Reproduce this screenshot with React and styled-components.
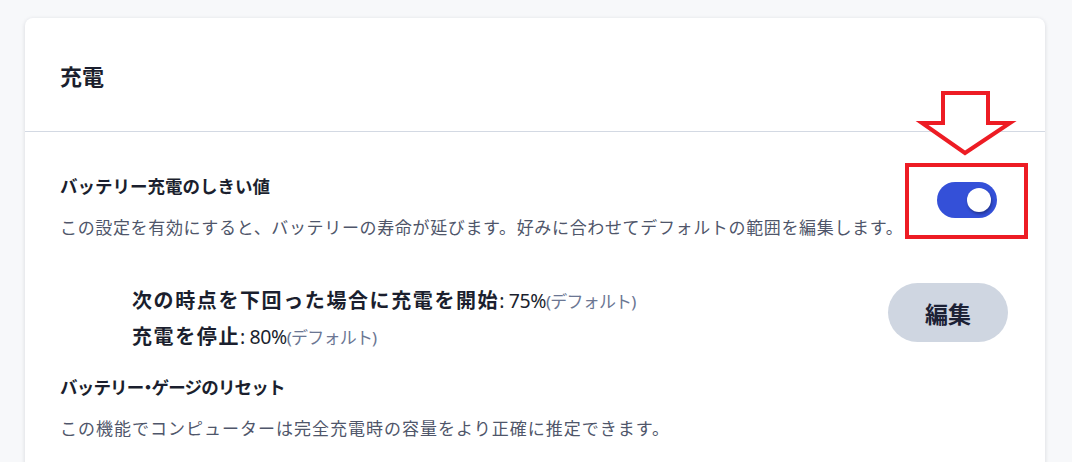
import React from "react";
import styled, { createGlobalStyle } from "styled-components";

const Global = createGlobalStyle`
  html, body { margin: 0; padding: 0; background: #f7f8fa; }
  body {
    font-family: "Noto Sans", "Noto Sans CJK JP", sans-serif;
    color: #1b1f2e;
  }
`;

const Page = styled.div`
  padding: 18px 27px 0 25px;
  height: 462px;
  box-sizing: border-box;
  overflow: hidden;
`;

const Card = styled.section`
  width: 1020px;
  background: #ffffff;
  border-radius: 8px;
  box-shadow: 0 1px 4px rgba(20, 30, 50, 0.14);
  min-height: 480px;
`;

const Header = styled.header`
  height: 114px;
  box-sizing: border-box;
  padding: 0 35px;
  display: flex;
  align-items: center;
  border-bottom: 1px solid #d3d9e3;
`;

const HeaderTitle = styled.h2`
  margin: 0;
  font-size: 22px;
  font-weight: 700;
  color: #1b1f2e;
`;

const Body = styled.div`
  padding: 41px 35px 0;
`;

const SettingRow = styled.div`
  display: flex;
  align-items: center;
  justify-content: space-between;
`;

const Texts = styled.div`
  display: flex;
  flex-direction: column;
  gap: 16px;
`;

const Title = styled.div`
  font-size: 17.5px;
  line-height: 26px;
  font-weight: 700;
  color: #1b1f2e;
  letter-spacing: ${(p) => (p.$tight ? "-0.8px" : "0")};
`;

const Dot = styled.span`
  font-feature-settings: "halt";
`;

const Desc = styled.div`
  font-size: 17px;
  letter-spacing: ${(p) => (p.$wide ? "1px" : "0.65px")};
  line-height: 26px;
  color: #4f566a;
`;

const ToggleWrap = styled.div`
  position: relative;
  margin-right: 13px;
  margin-top: -14px;
`;

const Track = styled.div`
  width: 60px;
  height: 36px;
  border-radius: 18px;
  background: #3450d8;
  display: flex;
  align-items: center;
  justify-content: flex-end;
  padding-right: 6px;
  box-sizing: border-box;
`;

const Knob = styled.div`
  width: 24px;
  height: 24px;
  border-radius: 50%;
  background: #ffffff;
  box-shadow: 1px 2px 3px rgba(10, 20, 60, 0.45);
`;

const RedBox = styled.div`
  position: absolute;
  left: -32px;
  top: -19px;
  width: 123px;
  height: 76px;
  box-sizing: border-box;
  border: 4px solid #ed1c24;
  pointer-events: none;
`;

const Arrow = styled.svg`
  position: absolute;
  left: -19px;
  top: -93px;
  width: 96px;
  height: 68px;
  overflow: visible;
`;

const SubRow = styled.div`
  display: flex;
  align-items: flex-start;
  justify-content: space-between;
  margin-top: 42px;
  padding-left: 72px;
`;

const Lines = styled.div`
  display: flex;
  flex-direction: column;
`;

const Line = styled.div`
  font-size: 20px;
  line-height: 35px;
  color: #1b1f2e;
  white-space: nowrap;
`;

const Strong = styled.span`
  font-weight: 700;
  letter-spacing: 1.6px;
`;

const Value = styled.span`
  font-size: 19.5px;
  font-weight: 400;
  letter-spacing: -0.4px;
`;

const Default = styled.span`
  font-size: 17px;
  letter-spacing: -0.8px;
  color: #6b7693;
`;

const EditButton = styled.button`
  width: 120px;
  height: 59px;
  border: none;
  border-radius: 30px;
  background: #cfd6e1;
  color: #1c2135;
  font-family: inherit;
  font-size: 23px;
  font-weight: 700;
  margin-right: 2px;
  cursor: pointer;
`;

const Section = styled.div`
  margin-top: 19px;
`;

export default function App() {
  return (
    <>
      <Global />
      <Page>
        <Card>
          <Header>
            <HeaderTitle>充電</HeaderTitle>
          </Header>
          <Body>
            <SettingRow>
              <Texts>
                <Title>バッテリー充電のしきい値</Title>
                <Desc>
                  この設定を有効にすると、バッテリーの寿命が延びます。好みに合わせてデフォルトの範囲を編集します。
                </Desc>
              </Texts>
              <ToggleWrap>
                <Track>
                  <Knob />
                </Track>
                <RedBox />
                <Arrow viewBox="0 0 96 68">
                  <polygon
                    points="25,4 70,4 70,34 92,34 47,64 4,34 25,34"
                    fill="#ffffff"
                    stroke="#ed1c24"
                    strokeWidth="4"
                    strokeLinejoin="miter"
                  />
                </Arrow>
              </ToggleWrap>
            </SettingRow>
            <SubRow>
              <Lines>
                <Line>
                  <Strong>次の時点を下回った場合に充電を開始</Strong>
                  <Value>: 75%</Value>
                  <Default>(デフォルト)</Default>
                </Line>
                <Line>
                  <Strong>充電を停止</Strong>
                  <Value>: 80%</Value>
                  <Default>(デフォルト)</Default>
                </Line>
              </Lines>
              <EditButton>編集</EditButton>
            </SubRow>
            <Section>
              <Texts>
                <Title $tight>
                  バッテリー<Dot>・</Dot>ゲージのリセット
                </Title>
                <Desc $wide>この機能でコンピューターは完全充電時の容量をより正確に推定できます。</Desc>
              </Texts>
            </Section>
          </Body>
        </Card>
      </Page>
    </>
  );
}
